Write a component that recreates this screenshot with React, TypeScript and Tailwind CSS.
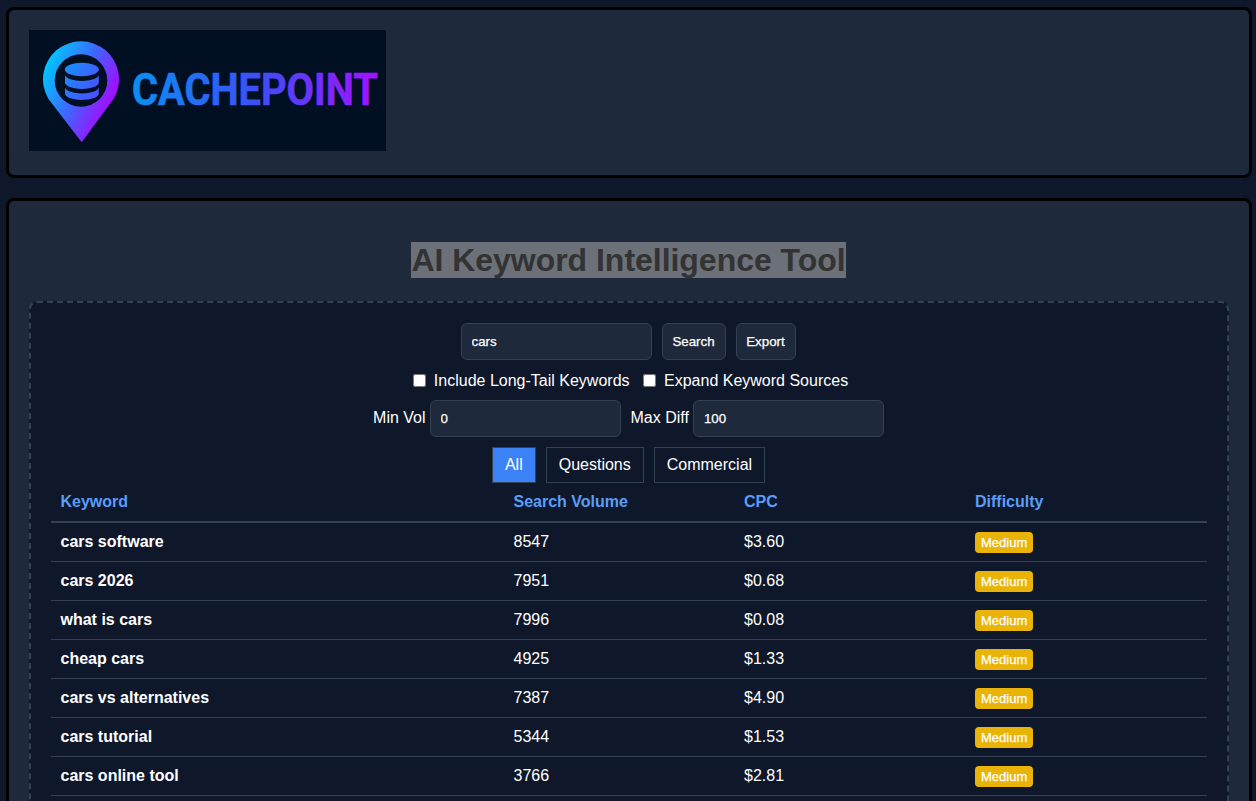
import React from "react";

const rows = [
  ["cars software", "8547", "$3.60"],
  ["cars 2026", "7951", "$0.68"],
  ["what is cars", "7996", "$0.08"],
  ["cheap cars", "4925", "$1.33"],
  ["cars vs alternatives", "7387", "$4.90"],
  ["cars tutorial", "5344", "$1.53"],
  ["cars online tool", "3766", "$2.81"],
];

const Logo = () => (
  <svg width="357" height="121" viewBox="0 0 357 121" className="block bg-[#000f22]">
    <defs>
      <linearGradient id="pin" gradientUnits="userSpaceOnUse" x1="14" y1="38" x2="88" y2="72">
        <stop offset="0" stopColor="#00c8ff" />
        <stop offset="0.5" stopColor="#3f66ff" />
        <stop offset="1" stopColor="#b000ff" />
      </linearGradient>
      <linearGradient id="db" gradientUnits="userSpaceOnUse" x1="36" y1="40" x2="70" y2="60">
        <stop offset="0" stopColor="#1a8cff" />
        <stop offset="1" stopColor="#4a50ff" />
      </linearGradient>
      <linearGradient id="word" gradientUnits="userSpaceOnUse" x1="0" y1="0" x2="268" y2="0">
        <stop offset="0" stopColor="#0a90f0" />
        <stop offset="0.5" stopColor="#3a50f5" />
        <stop offset="1" stopColor="#a510ff" />
      </linearGradient>
    </defs>
    <path d="M52.7 112.3 L19.5 69 A38 38 0 1 1 84.5 69 Z" fill="url(#pin)" />
    <circle cx="52" cy="50.5" r="26.3" fill="#000f22" />
    <ellipse cx="52.8" cy="39.5" rx="17" ry="6.8" fill="url(#db)" />
    <path d="M36 45 A17 6.8 0 0 0 69.8 45 V53 A17 6.8 0 0 1 36 53 Z" fill="url(#db)" />
    <path d="M36 57.5 A17 6.8 0 0 0 69.8 57.5 V64 A17 6.8 0 0 1 36 64 Z" fill="url(#db)" />
    <text
      transform="translate(103 75) scale(0.915 1)"
      fill="url(#word)"
      stroke="url(#word)"
      strokeWidth="0.6"
      fontFamily="Roboto, sans-serif"
      fontWeight="700"
      fontSize="43.5"
    >
      CACHEPOINT
    </text>
  </svg>
);

export default function App() {
  return (
    <div className="h-[801px] overflow-hidden bg-[#0f172a] pl-[6px] pr-[4px] pt-[7px] font-['Liberation_Sans',sans-serif] text-white">
      <header className="rounded-lg border-[3px] border-black bg-[#1e293b] px-5 pt-5 pb-6">
        <Logo />
      </header>

      <main className="mt-5 rounded-lg border-[3px] border-black bg-[#1e293b] px-5 pt-[41px]">
        <h1 className="mb-[22px] pr-[1px] text-center text-[32px] leading-[37px] font-bold tracking-[-0.03px] text-[#333333]">
          <span className="bg-[#6b7079]">AI Keyword Intelligence Tool</span>
        </h1>

        <section className="rounded-lg border-2 border-dashed border-[#334155] bg-[#0f172a] px-5 pt-5 pb-5">
          <div className="flex justify-center pr-[2px]">
            <input
              defaultValue="cars"
              className="h-[37px] w-[191px] rounded-md border border-[#334155] bg-[#1e293b] px-2.5 text-[13.33px] text-white [-webkit-text-stroke:0.25px_white]"
            />
            <button className="ml-2.5 h-[37px] w-16 rounded-md border border-[#334155] bg-[#1e293b] text-[13.33px] text-white [-webkit-text-stroke:0.25px_white]">
              Search
            </button>
            <button className="ml-2.5 h-[37px] w-[60px] rounded-md border border-[#334155] bg-[#1e293b] text-[13.33px] text-white [-webkit-text-stroke:0.25px_white]">
              Export
            </button>
          </div>

          <div className="mt-2.5 flex h-5 items-center justify-center pl-[3px] text-base">
            <label className="flex items-center">
              <input type="checkbox" className="mr-2 h-[13px] w-[13px]" />
              <span className="pt-[2px]">Include Long-Tail Keywords</span>
            </label>
            <label className="ml-[13.5px] flex items-center">
              <input type="checkbox" className="mr-2 h-[13px] w-[13px]" />
              <span className="pt-[2px]">Expand Keyword Sources</span>
            </label>
          </div>

          <div className="mt-2.5 flex items-center justify-center pr-[1px] text-base">
            <span className="mr-1 pb-[2px]">Min Vol</span>
            <input
              defaultValue="0"
              className="h-[37px] w-[191px] rounded-md border border-[#334155] bg-[#1e293b] px-2.5 text-[13.33px] text-white [-webkit-text-stroke:0.25px_white]"
            />
            <span className="ml-2.5 mr-1 pb-[2px]">Max Diff</span>
            <input
              defaultValue="100"
              className="h-[37px] w-[191px] rounded-md border border-[#334155] bg-[#1e293b] px-2.5 text-[13.33px] text-white [-webkit-text-stroke:0.25px_white]"
            />
          </div>

          <div className="mt-2.5 flex justify-center gap-2.5 pr-[1px] text-base">
            <button className="h-9 border border-[#334155] bg-[#3b82f6] px-3 text-white">All</button>
            <button className="h-9 border border-[#334155] px-3 text-white">Questions</button>
            <button className="h-9 border border-[#334155] px-3 text-white">Commercial</button>
          </div>

          <table className="w-full table-fixed border-collapse text-left text-base">
            <colgroup>
              <col className="w-[453px]" />
              <col className="w-[230px]" />
              <col className="w-[231px]" />
              <col />
            </colgroup>
            <thead>
              <tr className="h-[39px] border-b-2 border-[#334155] text-[#589ef9]">
                <th className="pl-[9.5px] font-bold">Keyword</th>
                <th className="pl-[9.5px] font-bold">Search Volume</th>
                <th className="pl-2.5 font-bold">CPC</th>
                <th className="pl-2.5 font-bold">Difficulty</th>
              </tr>
            </thead>
            <tbody>
              {rows.map((r) => (
                <tr key={r[0]} className="h-[39px] border-b border-[#334155]">
                  <td className="pl-[9.5px] font-bold">{r[0]}</td>
                  <td className="pl-[9.5px]">{r[1]}</td>
                  <td className="pl-2.5">{r[2]}</td>
                  <td className="pl-2.5">
                    <span className="inline-block rounded bg-[#eab308] px-1.5 py-[3px] align-middle text-[13px] leading-[15px] text-white [-webkit-text-stroke:0.25px_white]">
                      Medium
                    </span>
                  </td>
                </tr>
              ))}
            </tbody>
          </table>
        </section>
      </main>
    </div>
  );
}
